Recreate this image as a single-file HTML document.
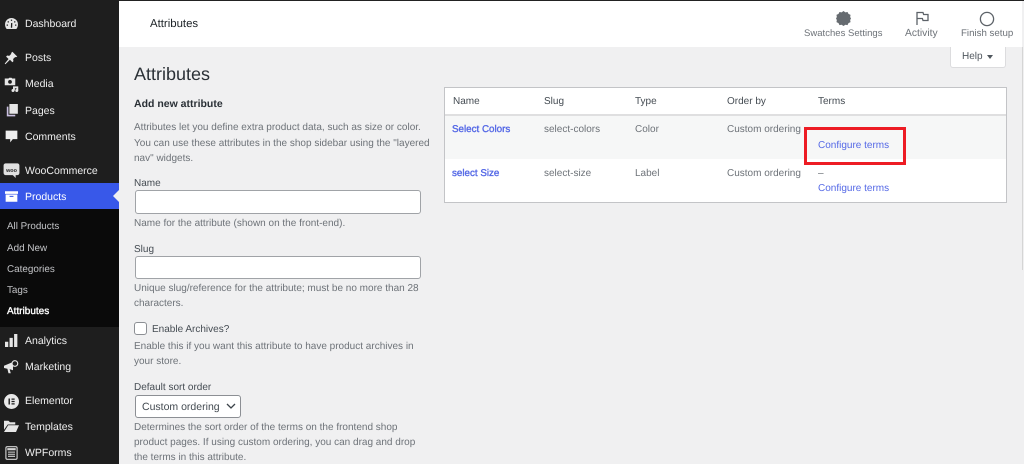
<!DOCTYPE html>
<html><head><meta charset="utf-8"><style>
html,body{margin:0;padding:0;width:1024px;height:464px;overflow:hidden;background:#f0f0f1}
body{position:relative;font-family:"Liberation Sans",sans-serif;text-rendering:geometricPrecision}
.t{position:absolute;white-space:nowrap;font-size:10.5px;line-height:14px;color:#50575e}
.s{color:#eeeeee}
.u{color:#c3c4c7;font-size:9.9px}
.d{color:#6d7278;font-size:10px}
.l{color:#444b52;font-size:10px}
.a{color:#5468e6;font-size:10px}
.n{-webkit-text-stroke:.35px currentColor;font-size:9.8px}
.b{position:absolute}
svg{position:absolute}
</style></head><body>
<div class="b" style="left:0;top:0;width:119px;height:464px;background:#1e1e1e"></div>
<div class="b" style="left:0;top:183px;width:119px;height:26px;background:#3858e9"></div>
<div class="b" style="left:0;top:209px;width:119px;height:118px;background:#0a0a0a"></div>
<div class="b" style="left:113px;top:190px;width:0;height:0;border:6px solid transparent;border-left:0;border-right-color:#f0f0f1"></div>
<div class="b" style="left:119px;top:0;width:903px;height:47px;background:#fff"></div>
<div class="b" style="left:119px;top:0;width:905px;height:1px;background:#222"></div>
<div class="b" style="left:1022px;top:47px;width:1px;height:223px;background:#d5d5d5"></div>

<!-- sidebar icons -->
<svg style="left:5px;top:18px" width="13" height="11" viewBox="0 0 20 17"><path fill="#e6e6e6" d="M10 0a10 10 0 0 0-10 10c0 2.700.9 5 2.500 7h15c1.600-2 2.500-4.300 2.500-7A10 10 0 0 0 10 0z"/><path fill="#1e1e1e" d="M9 2.500h2v2H9zM4 5h2v2H4zM14 5h2v2h-2zM2.500 10h2v2h-2zM15.500 10h2v2h-2zM9 15l.3-7 2-.5-.3 7.500z"/></svg>
<svg style="left:4px;top:51px" width="14" height="14" viewBox="0 0 20 20"><path fill="#e6e6e6" d="M12 1l7 7-2 1-1-.500-3 3 .5 3-1.500 1.500-3.500-3.500L2 19l-1-1 5.500-6.500L3 8l1.500-1.500 3 .5 3-3L10 3z"/></svg>
<svg style="left:4px;top:77px" width="15" height="15" viewBox="0 0 20 20"><path fill="#e6e6e6" d="M1 2h5l1-1h3l1 1h4v9H1z"/><circle cx="8" cy="6.500" r="2.500" fill="#1e1e1e"/><path fill="#e6e6e6" d="M12 12.500h7V18h-2.400v-3H14.500v3H12z"/><circle cx="12" cy="18" r="2" fill="#e6e6e6"/><circle cx="17" cy="18" r="2" fill="#e6e6e6"/></svg>
<svg style="left:6px;top:104px" width="12" height="13" viewBox="0 0 18 20"><path fill="#e6e6e6" d="M5 0h13v15H5z"/><path fill="#c9bfe0" d="M1 4h2.500v12.500H14V19H1z"/></svg>
<svg style="left:5px;top:130px" width="13" height="13" viewBox="0 0 20 20"><path fill="#f0f0f0" d="M1 1h18v13h-7l-4 5v-5H1z"/></svg>
<svg style="left:3px;top:163px" width="17" height="15" viewBox="0 0 20 18"><rect x=".5" y=".5" width="19" height="14" rx="2.500" fill="#e0e0e0"/><path fill="#e0e0e0" d="M11 14h4v4z"/><text x="10" y="10.500" font-size="6.500" font-weight="700" text-anchor="middle" fill="#1e1e1e" font-family="Liberation Sans">woo</text></svg>
<svg style="left:5px;top:190px" width="13" height="13" viewBox="0 0 20 20"><path fill="#fff" d="M0 2h20v4H0zM1 7h18v11H1z"/><rect x="7" y="9" width="6" height="1.600" fill="#3858e9"/></svg>
<svg style="left:5px;top:334px" width="13" height="13" viewBox="0 0 20 20"><path fill="#e6e6e6" d="M0 12h5v8H0zM7 6h5v14H7zM14 0h5v20h-5z"/></svg>
<svg style="left:4px;top:359px" width="15" height="15" viewBox="0 0 20 20"><path fill="#e6e6e6" d="M0 9l12-5v11l-4.500-1.500L9 19H6L4.500 13 0 12z"/><circle cx="14.500" cy="6" r="3.800" fill="#1e1e1e" stroke="#e6e6e6" stroke-width="1.500"/></svg>
<svg style="left:4px;top:394px" width="15" height="15" viewBox="0 0 20 20"><circle cx="10" cy="10" r="10" fill="#e8e8e8"/><path fill="#1e1e1e" d="M6 6h1.900v8H6zM10 6h4.200v1.600H10zM10 9.200h4.200v1.600H10zM10 12.400h4.200V14H10z"/></svg>
<svg style="left:4px;top:420px" width="15" height="12" viewBox="0 0 20 16"><path fill="#e6e6e6" d="M0 1h6l2 2h7v3H5L0 13zM5.500 7H20l-4 9H0z"/></svg>
<svg style="left:5px;top:446px" width="13" height="14" viewBox="0 0 18 20"><rect x="1" y="1" width="16" height="18" rx="2" fill="none" stroke="#d5d5d5" stroke-width="1.600"/><path fill="#d5d5d5" d="M3 3h12v3H3zM4 8h10v1.500H4zM4 11h10v1.500H4zM4 14h10v1.500H4z"/></svg>

<!-- sidebar labels -->
<div class="t s" style="left:25px;top:17px">Dashboard</div>
<div class="t s" style="left:25px;top:51px">Posts</div>
<div class="t s" style="left:25px;top:77px">Media</div>
<div class="t s" style="left:25px;top:104px">Pages</div>
<div class="t s" style="left:25px;top:130px">Comments</div>
<div class="t s" style="left:25px;top:164px">WooCommerce</div>
<div class="t" style="left:25px;top:190px;color:#fff">Products</div>
<div class="t u" style="left:7px;top:220px;font-size:9.800px">All Products</div>
<div class="t u" style="left:7px;top:242px">Add New</div>
<div class="t u" style="left:7px;top:263px">Categories</div>
<div class="t u" style="left:7px;top:284px">Tags</div>
<div class="t u n" style="left:7px;top:305px;color:#fff;font-size:10px">Attributes</div>
<div class="t s" style="left:25px;top:334px">Analytics</div>
<div class="t s" style="left:25px;top:360px">Marketing</div>
<div class="t s" style="left:25px;top:394px">Elementor</div>
<div class="t s" style="left:25px;top:420px">Templates</div>
<div class="t s" style="left:25px;top:446px">WPForms</div>

<!-- top bar -->
<div class="t" style="left:150px;top:17px;color:#1d2327;font-size:11.400px">Attributes</div>
<svg style="left:836px;top:11px" width="15" height="15" viewBox="0 0 16 16"><path fill="#666b70" d="M8 0l2 1.400 2.300-.4 1 2.100 2.200 1-.4 2.300L16 8l-.9 1.600.4 2.300-2.200 1-1 2.100-2.300-.4L8 16l-2-1.400-2.300.4-1-2.100-2.200-1 .4-2.300L0 8l.9-1.600-.4-2.300 2.200-1 1-2.100 2.300.4z"/></svg>
<svg style="left:915px;top:11px" width="14" height="14" viewBox="0 0 14 14"><path fill="none" stroke="#5c6268" stroke-width="1.300" d="M2 14V1.500h6l.6 2H13v6H8l-.6-2H2"/></svg>
<svg style="left:979px;top:10.500px" width="16" height="16" viewBox="0 0 16 16"><circle cx="8" cy="8" r="6.600" fill="none" stroke="#5c6268" stroke-width="1.300"/></svg>
<div class="t d" style="left:804px;top:27px;font-size:9.500px;letter-spacing:.02px">Swatches Settings</div>
<div class="t d" style="left:905px;top:27px;font-size:10.300px">Activity</div>
<div class="t d" style="left:961px;top:27px;font-size:9.700px">Finish setup</div>
<div class="b" style="left:950px;top:47px;width:56px;height:21px;background:#fff;border:1px solid #dcdcde;border-top:0;box-sizing:border-box;border-radius:0 0 3px 3px"></div>
<div class="t d" style="left:962px;top:50px;color:#50575e">Help</div>
<div class="b" style="left:987px;top:55px;width:0;height:0;border:3.500px solid transparent;border-top:4px solid #50575e;border-bottom:0"></div>

<!-- form -->
<div class="t" style="left:134px;top:63px;font-size:18px;line-height:22px;color:#2a3036">Attributes</div>
<div class="t" style="left:134px;top:97px;font-size:10.500px;font-weight:700;color:#2a3036">Add new attribute</div>
<div class="t d" style="left:134px;top:121px">Attributes let you define extra product data, such as size or color.</div>
<div class="t d" style="left:134px;top:137px">You can use these attributes in the shop sidebar using the "layered</div>
<div class="t d" style="left:134px;top:152px">nav" widgets.</div>
<div class="t l" style="left:134px;top:177px">Name</div>
<div class="b" style="left:135px;top:190px;width:286px;height:24px;box-sizing:border-box;background:#fff;border:1px solid #a0a3a7;border-radius:3px"></div>
<div class="t d" style="left:134px;top:217px">Name for the attribute (shown on the front-end).</div>
<div class="t l" style="left:134px;top:243px">Slug</div>
<div class="b" style="left:135px;top:256px;width:286px;height:23px;box-sizing:border-box;background:#fff;border:1px solid #a0a3a7;border-radius:3px"></div>
<div class="t d" style="left:134px;top:282px">Unique slug/reference for the attribute; must be no more than 28</div>
<div class="t d" style="left:134px;top:297px">characters.</div>
<div class="b" style="left:134px;top:322px;width:13px;height:13px;box-sizing:border-box;background:#fff;border:1px solid #8c8f94;border-radius:3px"></div>
<div class="t l" style="left:152px;top:323px">Enable Archives?</div>
<div class="t d" style="left:134px;top:340px">Enable this if you want this attribute to have product archives in</div>
<div class="t d" style="left:134px;top:355px">your store.</div>
<div class="t l" style="left:134px;top:381px">Default sort order</div>
<div class="b" style="left:135px;top:395px;width:106px;height:23px;box-sizing:border-box;background:#fff;border:1px solid #8c8f94;border-radius:3px"></div>
<div class="t l" style="left:142px;top:400px;font-size:10.500px">Custom ordering</div>
<svg style="left:226px;top:403px" width="10" height="7" viewBox="0 0 10 7"><path fill="none" stroke="#3c434a" stroke-width="1.300" d="M1 1l4 4 4-4"/></svg>
<div class="t d" style="left:134px;top:421px">Determines the sort order of the terms on the frontend shop</div>
<div class="t d" style="left:134px;top:436px">product pages. If using custom ordering, you can drag and drop</div>
<div class="t d" style="left:134px;top:451px">the terms in this attribute.</div>

<!-- table -->
<div class="b" style="left:444px;top:87px;width:563px;height:116px;box-sizing:border-box;background:#fff;border:1px solid #c3c4c7"></div>
<div class="b" style="left:445px;top:114px;width:561px;height:2px;background:#dfdfe0"></div>
<div class="b" style="left:445px;top:116px;width:561px;height:43px;background:#f6f7f7"></div>
<div class="t l" style="left:453px;top:95px">Name</div>
<div class="t l" style="left:544px;top:95px">Slug</div>
<div class="t l" style="left:635px;top:95px">Type</div>
<div class="t l" style="left:727px;top:95px">Order by</div>
<div class="t l" style="left:818px;top:95px">Terms</div>
<div class="t a n" style="left:452px;top:123px">Select Colors</div>
<div class="t d" style="left:544px;top:123px">select-colors</div>
<div class="t d" style="left:635px;top:123px">Color</div>
<div class="t d" style="left:727px;top:123px">Custom ordering</div>
<div class="t a" style="left:818px;top:139px">Configure terms</div>
<div class="t a n" style="left:452px;top:167px">select Size</div>
<div class="t d" style="left:544px;top:167px">select-size</div>
<div class="t d" style="left:635px;top:167px">Label</div>
<div class="t d" style="left:727px;top:167px">Custom ordering</div>
<div class="t d" style="left:818px;top:167px">–</div>
<div class="t a" style="left:818px;top:182px">Configure terms</div>
<div class="b" style="left:804px;top:127px;width:102px;height:38px;box-sizing:border-box;border:3px solid #ed1c24"></div>
</body></html>
